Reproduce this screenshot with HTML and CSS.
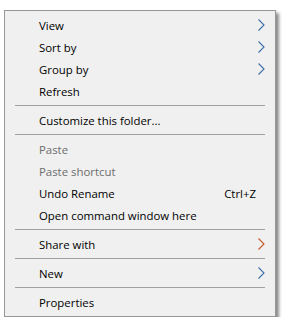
FILE: index.html
```html
<!DOCTYPE html>
<html>
<head>
<meta charset="utf-8">
<link rel="stylesheet" href="styles.css">
</head>
<body>
<div class="menu">
  <div class="item"><span class="label">View</span><span class="sub"><svg class="arrow blue" width="7" height="12" viewBox="0 0 7 12"><path d="M0.5 0.5 L6 6 L0.5 11.5" /></svg></span></div>
  <div class="item"><span class="label">Sort by</span><span class="sub"><svg class="arrow blue" width="7" height="12" viewBox="0 0 7 12"><path d="M0.5 0.5 L6 6 L0.5 11.5" /></svg></span></div>
  <div class="item"><span class="label">Group by</span><span class="sub"><svg class="arrow blue" width="7" height="12" viewBox="0 0 7 12"><path d="M0.5 0.5 L6 6 L0.5 11.5" /></svg></span></div>
  <div class="item"><span class="label">Refresh</span><span class="sub"></span></div>
  <div class="sep"></div>
  <div class="item"><span class="label">Customize this folder...</span><span class="sub"></span></div>
  <div class="sep"></div>
  <div class="item disabled"><span class="label">Paste</span><span class="sub"></span></div>
  <div class="item disabled"><span class="label">Paste shortcut</span><span class="sub"></span></div>
  <div class="item"><span class="label">Undo Rename</span><span class="key">Ctrl+Z</span><span class="sub"></span></div>
  <div class="item"><span class="label">Open command window here</span><span class="sub"></span></div>
  <div class="sep"></div>
  <div class="item"><span class="label">Share with</span><span class="sub"><svg class="arrow orange" width="7" height="12" viewBox="0 0 7 12"><path d="M0.5 0.5 L6 6 L0.5 11.5" /></svg></span></div>
  <div class="sep"></div>
  <div class="item"><span class="label">New</span><span class="sub"><svg class="arrow blue" width="7" height="12" viewBox="0 0 7 12"><path d="M0.5 0.5 L6 6 L0.5 11.5" /></svg></span></div>
  <div class="sep"></div>
  <div class="item"><span class="label">Properties</span><span class="sub"></span></div>
</div>
</body>
</html>
```

FILE: styles.css
```css
html, body {
  margin: 0;
  padding: 0;
  background: #ffffff;
}

.menu {
  box-sizing: border-box;
  width: 272px;
  margin: 10px 0 0 4px;
  padding: 3px 0;
  background: #f0f0f0;
  border: 1px solid #979797;
  box-shadow: 3px 3px 3px rgba(0, 0, 0, 0.45);
  font-family: "Open Sans", "Noto Sans", sans-serif;
  font-size: 11.4px;
  color: #000000;
}

.item {
  display: flex;
  align-items: center;
  height: 22px;
  padding-left: 34px;
}

.label {
  flex: 1;
  white-space: nowrap;
}

.key {
  white-space: nowrap;
}

.sub {
  width: 19px;
  height: 22px;
  display: flex;
  align-items: center;
  padding-left: 2px;
  box-sizing: border-box;
}

.disabled {
  color: #6d6d6d;
}

.arrow path {
  fill: none;
  stroke-width: 1.1;
}

.arrow.blue path {
  stroke: #3a6fa8;
}

.arrow.orange path {
  stroke: #c45a24;
}

.sep {
  height: 1px;
  margin: 3px 10px 3px 10px;
  background: #a0a0a0;
}
```
